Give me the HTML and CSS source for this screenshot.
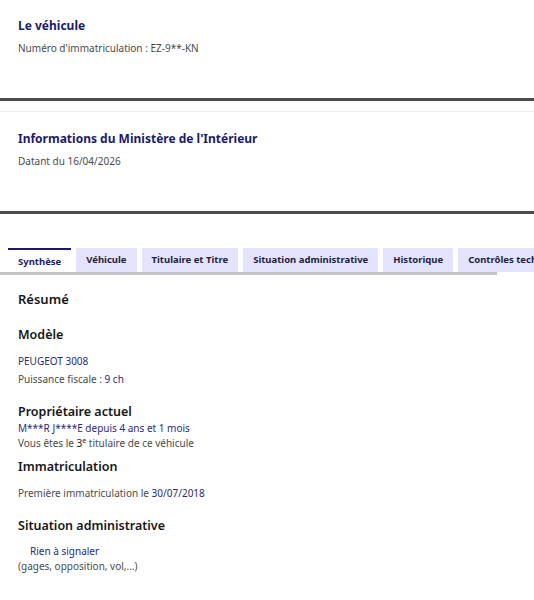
FILE: index.html
```html
<!DOCTYPE html>
<html lang="fr">
<head>
    <meta charset="UTF-8">
    <meta name="viewport" content="width=device-width, initial-scale=1.0">
    <title>Historique de véhicule</title>
    <link rel="stylesheet" href="styles.css">
</head>
<body>
    <div class="block">
        <h2 class="block-title">Le véhicule</h2>
        <p class="block-text">Numéro d'immatriculation : EZ-9**-KN</p>
    </div>
    <hr class="sep">
    <div class="faint"></div>

    <div class="block block-second">
        <h2 class="block-title">Informations du Ministère de l'Intérieur</h2>
        <p class="block-text">Datant du 16/04/2026</p>
    </div>
    <hr class="sep">

    <div class="tabs">
        <div class="tab-scroll">
            <ul class="tab-list">
                <li class="tab active">Synthèse</li>
                <li class="tab">Véhicule</li>
                <li class="tab">Titulaire et Titre</li>
                <li class="tab">Situation administrative</li>
                <li class="tab">Historique</li>
                <li class="tab">Contrôles techniques</li>
            </ul>
        </div>
        <div class="tab-line"></div>
    </div>

    <div class="panel">
        <h3 class="panel-title">Résumé</h3>

        <h4 class="sub-title">Modèle</h4>
        <p class="line blue">PEUGEOT 3008</p>
        <p class="line">Puissance fiscale : <span class="blue">9 ch</span></p>

        <h4 class="sub-title tight">Propriétaire actuel</h4>
        <p class="line-s blue">M***R J****E depuis 4 ans et 1 mois</p>
        <p class="line-s">Vous êtes le <span class="dark">3<sup>e</sup></span> titulaire de ce véhicule</p>

        <h4 class="sub-title">Immatriculation</h4>
        <p class="line">Première immatriculation le <span class="blue">30/07/2018</span></p>

        <h4 class="sub-title">Situation administrative</h4>
        <p class="line-s blue indent">Rien à signaler</p>
        <p class="line-s">(gages, opposition, vol,...)</p>
    </div>
</body>
</html>
```

FILE: styles.css
```css
body {
    margin: 0;
    font-family: "Noto Sans", "Open Sans", sans-serif;
    color: #3a3a3a;
    background-color: #ffffff;
    overflow: hidden;
}

.block {
    padding: 16px 18px 0;
    height: 82px;
}

.block-title {
    margin: 0;
    font-size: 12px;
    line-height: 20px;
    font-weight: 700;
    color: #1b1a6b;
}

.block-text {
    margin: 4px 0 0;
    font-size: 10px;
    line-height: 16px;
    color: #4a4a4a;
}

.sep {
    margin: 0;
    border: none;
    height: 3px;
    background-color: #4b4b4b;
}

.faint {
    height: 10px;
    border-bottom: 1px solid #ececec;
}

.block-second {
    padding-top: 17px;
    height: 82px;
}

/* onglets */
.tabs {
    padding-top: 34px;
}

.tab-scroll {
    overflow: hidden;
    padding-left: 8px;
}

.tab-list {
    list-style: none;
    margin: 0;
    padding: 0;
    display: flex;
    gap: 5px;
    white-space: nowrap;
}

.tab {
    flex: none;
    height: 24px;
    line-height: 24px;
    padding: 0 10px;
    font-size: 9.5px;
    font-weight: 700;
    color: #1e1e3c;
    background-color: #e3e3fd;
}

.tab.active {
    background-color: #ffffff;
    border-top: 2px solid #1b1a6b;
    height: 22px;
    line-height: 24px;
    color: #1b1a6b;
}

.tab-line {
    height: 3px;
    width: 497px;
    background-color: #c4c4c4;
}

.panel {
    padding: 14px 18px 0;
}

.panel-title {
    margin: 0 0 16px;
    font-size: 13px;
    line-height: 20px;
    font-weight: 600;
    color: #161616;
}

.sub-title {
    margin: 0 0 8px;
    font-size: 12.5px;
    line-height: 20px;
    font-weight: 600;
    color: #161616;
}

.sub-title.tight {
    margin: 12px 0 -1px;
}

.line {
    margin: 0 0 2px;
    font-size: 10px;
    line-height: 16px;
    color: #4a4a4a;
}

.line + .sub-title {
    margin-top: 15px;
}

.line-s {
    margin: 0;
    font-size: 10px;
    line-height: 15px;
    color: #4a4a4a;
}

.line-s + .sub-title {
    margin-top: 6px;
}

.blue {
    color: #2b2a79;
}

.dark {
    color: #222222;
}

sup {
    font-size: 7px;
    line-height: 0;
}

.indent {
    padding-left: 12px;
}
```
